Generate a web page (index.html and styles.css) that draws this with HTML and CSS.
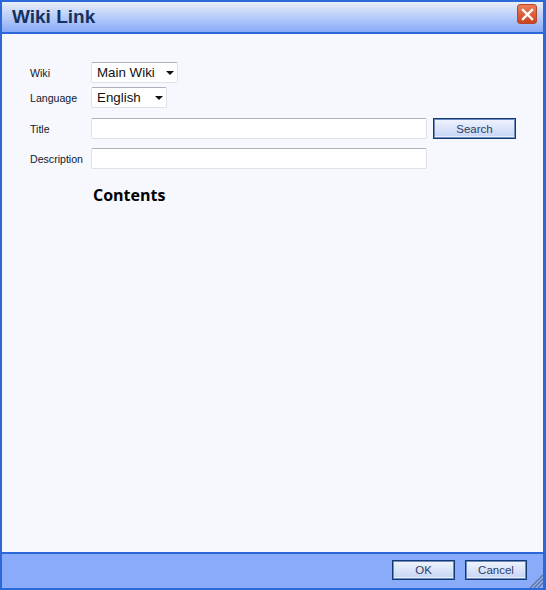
FILE: index.html
```html
<!DOCTYPE html>
<html lang="en">
<head>
  <meta charset="UTF-8">
  <meta name="viewport" content="width=device-width, initial-scale=1.0">
  <title>Wiki Link</title>
  <link rel="stylesheet" href="styles.css">
</head>
<body>
  <div class="dialog">
    <div class="dialog-header">
      <span class="dialog-title">Wiki Link</span>
      <button class="close-button" aria-label="Close">
        <svg width="13" height="13" viewBox="0 0 13 13"><path d="M2 2 L11 11 M11 2 L2 11" stroke="#fff" stroke-width="2.4" stroke-linecap="square" fill="none"/></svg>
      </button>
    </div>
    <div class="dialog-body">
      <div class="form-row select-row">
        <label>Wiki</label>
        <div class="select wiki-select">Main Wiki<span class="arrow"></span></div>
      </div>
      <div class="form-row select-row language-row">
        <label>Language</label>
        <div class="select language-select">English<span class="arrow"></span></div>
      </div>
      <div class="form-row input-row title-row">
        <label>Title</label>
        <input type="text">
        <button class="btn search-btn">Search</button>
      </div>
      <div class="form-row input-row description-row">
        <label>Description</label>
        <input type="text">
      </div>
      <h2 class="contents">Contents</h2>
    </div>
    <div class="dialog-footer">
      <button class="btn ok-btn">OK</button>
      <button class="btn cancel-btn">Cancel</button>
      <svg class="grip" width="15" height="15" viewBox="0 0 15 15"><path d="M15 2 L2 15 M15 6 L6 15 M15 10 L10 15" stroke="#5f6f8f" stroke-width="1.2" fill="none"/></svg>
    </div>
  </div>
</body>
</html>
```

FILE: styles.css
```css
html, body {
  height: 100%;
}
body {
  margin: 0;
  font-family: "Liberation Sans", Arial, sans-serif;
  font-size: 10.6px;
  color: #10182c;
  overflow: hidden;
}
.dialog {
  box-sizing: border-box;
  width: 546px;
  height: 590px;
  display: flex;
  flex-direction: column;
  border: 2px solid #2c68d8;
  border-right-width: 3px;
  background-color: #f6f8fe;
}
.dialog-header {
  position: relative;
  flex: 0 0 30px;
  display: flex;
  align-items: center;
  padding-left: 10px;
  background: linear-gradient(to bottom, #e8eefb, #88abf8);
  border-bottom: 2px solid #2c68d8;
}
.dialog-title {
  font-size: 19px;
  font-weight: bold;
  color: #15315f;
}
.close-button {
  position: absolute;
  top: 2px;
  right: 6px;
  width: 20px;
  height: 20px;
  padding: 0;
  display: flex;
  align-items: center;
  justify-content: center;
  border: 1px solid #b5482c;
  border-radius: 3px;
  background: linear-gradient(to bottom, #ee7c58, #cc4420);
}
.dialog-body {
  flex: 1;
  padding: 28px 0 0 28px;
}
.form-row {
  display: flex;
  align-items: center;
}
.form-row label {
  width: 61px;
  flex: none;
}
.select {
  box-sizing: border-box;
  height: 21px;
  display: flex;
  align-items: center;
  padding-left: 5px;
  font-size: 13.33px;
  color: #111;
  background-color: #fff;
  border: 1px solid #dfe1ea;
  border-top-color: #aeb0b8;
  border-radius: 2px;
}
.wiki-select {
  width: 87px;
}
.language-select {
  width: 76px;
}
.arrow {
  margin-left: auto;
  margin-right: 3px;
  width: 0;
  height: 0;
  border-left: 4px solid transparent;
  border-right: 4px solid transparent;
  border-top: 4px solid #111;
}
.language-row {
  margin-top: 4px;
}
.title-row {
  margin-top: 10px;
}
.description-row {
  margin-top: 9px;
}
.form-row input {
  box-sizing: border-box;
  width: 336px;
  height: 21px;
  padding: 0 3px;
  background-color: #fff;
  border: 1px solid #dfe1ea;
  border-top-color: #aeb0b8;
  border-radius: 2px;
  outline: none;
}
.btn {
  box-sizing: border-box;
  height: 20px;
  padding: 0;
  font-family: "Liberation Sans", Arial, sans-serif;
  font-size: 11.5px;
  color: #2b4064;
  background: linear-gradient(to bottom, #f0f4fd, #c4d3f6);
  border: 1px solid #123a70;
  box-shadow: inset 0 0 0 1px #6d8cc0, inset 0 -2px 0 #e8eefc;
}
.search-btn {
  width: 83px;
  height: 21px;
  margin-left: 6px;
}
.contents {
  margin: 15px 0 0 63px;
  font-family: "Open Sans", "DejaVu Sans", sans-serif;
  font-size: 16px;
  font-weight: bold;
  color: #000;
}
.dialog-footer {
  position: relative;
  box-sizing: border-box;
  flex: 0 0 36px;
  display: flex;
  justify-content: flex-end;
  align-items: center;
  gap: 10px;
  padding: 0 16px 2px 0;
  background-color: #8aaafa;
  border-top: 2px solid #2c68d8;
}
.ok-btn {
  width: 63px;
}
.cancel-btn {
  width: 62px;
}
.grip {
  position: absolute;
  right: 0;
  bottom: 0;
}
```
